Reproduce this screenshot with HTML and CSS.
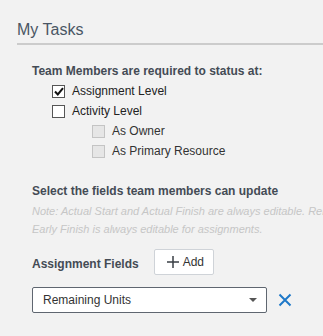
FILE: index.html
```html
<!DOCTYPE html>
<html lang="en">
<head>
  <meta charset="UTF-8">
  <title>My Tasks</title>
  <link rel="stylesheet" href="styles.css">
</head>
<body>
  <div class="panel">
    <h2 class="panel-title">My Tasks</h2>

    <div class="section status">
      <div class="section-label">Team Members are required to status at:</div>
      <div class="check-row">
        <span class="box">
          <svg width="10" height="9" viewBox="0 0 10 9"><path d="M1 4.5 L3.8 7.5 L9 1.2" fill="none" stroke="#111" stroke-width="2"/></svg>
        </span>
        <span>Assignment Level</span>
      </div>
      <div class="check-row">
        <span class="box"></span>
        <span>Activity Level</span>
      </div>
      <div class="check-row sub">
        <span class="box disabled"></span>
        <span>As Owner</span>
      </div>
      <div class="check-row sub">
        <span class="box disabled"></span>
        <span>As Primary Resource</span>
      </div>
    </div>

    <div class="section fields">
      <div class="section-label">Select the fields team members can update</div>
      <p class="note">Note: Actual Start and Actual Finish are always editable. Remaining Early Finish is always editable for assignments.</p>

      <div class="field-head">
        <div class="section-label">Assignment Fields</div>
        <button type="button" class="add-btn">
          <svg width="12" height="12" viewBox="0 0 12 12"><path d="M6 0 V12 M0 6 H12" stroke="#3a3f45" stroke-width="1.5"/></svg>
          Add
        </button>
      </div>

      <div class="field-row">
        <div class="select-box">
          <span>Remaining Units</span>
          <span class="caret"></span>
        </div>
        <svg class="remove" width="14" height="14" viewBox="0 0 14 14"><path d="M1.5 1.5 L12.5 12.5 M12.5 1.5 L1.5 12.5" stroke="#1f78c8" stroke-width="2"/></svg>
      </div>
    </div>
  </div>
</body>
</html>
```

FILE: styles.css
```css
* {
  margin: 0;
  padding: 0;
  box-sizing: border-box;
}
body {
  font-family: 'Liberation Sans', Arial, sans-serif;
  background: #f2f2f2;
  color: #333;
  overflow: hidden;
}
.panel {
  padding: 20px 0 0 17px;
  overflow: hidden;
}
.panel-title {
  font-size: 16px;
  font-weight: normal;
  color: #4a5664;
  line-height: 20px;
  padding-bottom: 3px;
  border-bottom: 2px solid #cccccc;
}
.section {
  padding-left: 15px;
}
.section-label {
  font-size: 12px;
  font-weight: bold;
  color: #444b55;
  line-height: 16px;
}
.status {
  margin-top: 18px;
}
.check-row {
  display: flex;
  align-items: center;
  gap: 7px;
  font-size: 12px;
  color: #222;
  height: 20px;
  padding-left: 20px;
}
.status .section-label {
  margin-bottom: 2px;
}
.check-row.sub {
  padding-left: 60px;
  color: #333;
}
.box {
  width: 13px;
  height: 13px;
  border: 1px solid #555;
  background: #fff;
  display: flex;
  align-items: center;
  justify-content: center;
}
.box.disabled {
  border-color: #c4c4c4;
  background: #e6e6e6;
}
.fields {
  margin-top: 22px;
}
.note {
  font-size: 11px;
  font-style: italic;
  color: #c6c6c6;
  line-height: 18px;
  margin-top: 3px;
  width: 340px;
}
.field-head {
  display: flex;
  align-items: flex-start;
  gap: 15px;
  margin-top: 15px;
}
.field-head .section-label {
  margin-top: 3px;
}
.add-btn {
  display: flex;
  align-items: center;
  gap: 4px;
  height: 26px;
  padding: 0 9px 0 12px;
  background: #fff;
  border: 1px solid #cfd3d8;
  border-radius: 2px;
  font-family: inherit;
  font-size: 12px;
  color: #333;
  margin-top: -4px;
}
.field-row {
  display: flex;
  align-items: center;
  gap: 11px;
  margin-top: 12px;
}
.select-box {
  width: 235px;
  height: 26px;
  border: 1px solid #5f6670;
  border-radius: 2px;
  background: #fff;
  display: flex;
  align-items: center;
  justify-content: space-between;
  padding: 0 9px 0 10px;
  font-size: 12px;
  color: #333;
}
.caret {
  width: 0;
  height: 0;
  border-left: 4px solid transparent;
  border-right: 4px solid transparent;
  border-top: 4px solid #555;
}
```
